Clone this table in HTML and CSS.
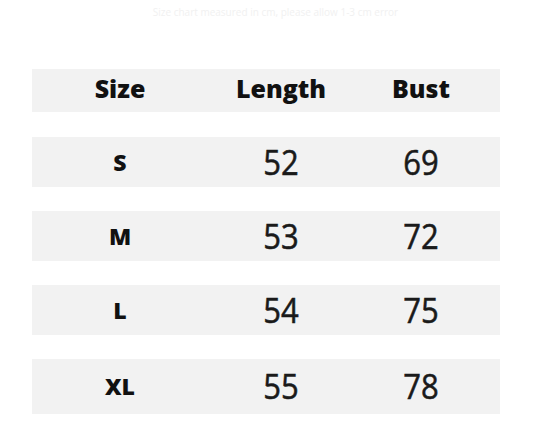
FILE: index.html
```html
<!DOCTYPE html>
<html>
<head>
<meta charset="utf-8">
<link rel="stylesheet" href="styles.css">
</head>
<body>
<div class="page">
  <div class="faint">Size chart measured in cm, please allow 1-3 cm error</div>
  <div class="table">
    <div class="row head">
      <div class="c c1">Size</div>
      <div class="c c2">Length</div>
      <div class="c c3">Bust</div>
    </div>
    <div class="row">
      <div class="c c1 size">S</div>
      <div class="c c2 num">52</div>
      <div class="c c3 num">69</div>
    </div>
    <div class="row">
      <div class="c c1 size">M</div>
      <div class="c c2 num">53</div>
      <div class="c c3 num">72</div>
    </div>
    <div class="row">
      <div class="c c1 size">L</div>
      <div class="c c2 num">54</div>
      <div class="c c3 num">75</div>
    </div>
    <div class="row last">
      <div class="c c1 size">XL</div>
      <div class="c c2 num">55</div>
      <div class="c c3 num">78</div>
    </div>
  </div>
</div>
</body>
</html>
```

FILE: styles.css
```css
html, body {
  margin: 0;
  padding: 0;
  background: #ffffff;
}
body {
  width: 541px;
  height: 440px;
  overflow: hidden;
  font-family: "Open Sans", "Noto Sans", sans-serif;
  color: #141414;
}
.page {
  padding-top: 6px;
}
.faint {
  height: 12px;
  font-size: 10px;
  line-height: 12px;
  color: #f1f1f1;
  text-align: center;
  padding-left: 10px;
}
.table {
  margin-top: 51px;
  margin-left: 32px;
  width: 468px;
  display: flex;
  flex-direction: column;
  gap: 24px;
}
.row {
  display: grid;
  grid-template-columns: 176px 146px 134px;
  height: 50px;
  background: #f2f2f2;
  align-items: center;
}
.row.head {
  height: 43px;
  margin-bottom: 1px;
}
.row.last {
  height: 55px;
}
.c {
  text-align: center;
  line-height: 1;
}
.head .c {
  font-weight: 800;
  font-size: 25px;
  color: #111111;
  transform: translateY(-2px);
}
.size {
  font-weight: 800;
  font-size: 23px;
  color: #111111;
}
.num {
  font-size: 31px;
  font-weight: 400;
  color: #1a1a1a;
  -webkit-text-stroke: 0.5px #1a1a1a;
  transform: scaleY(1.12);
}
```
